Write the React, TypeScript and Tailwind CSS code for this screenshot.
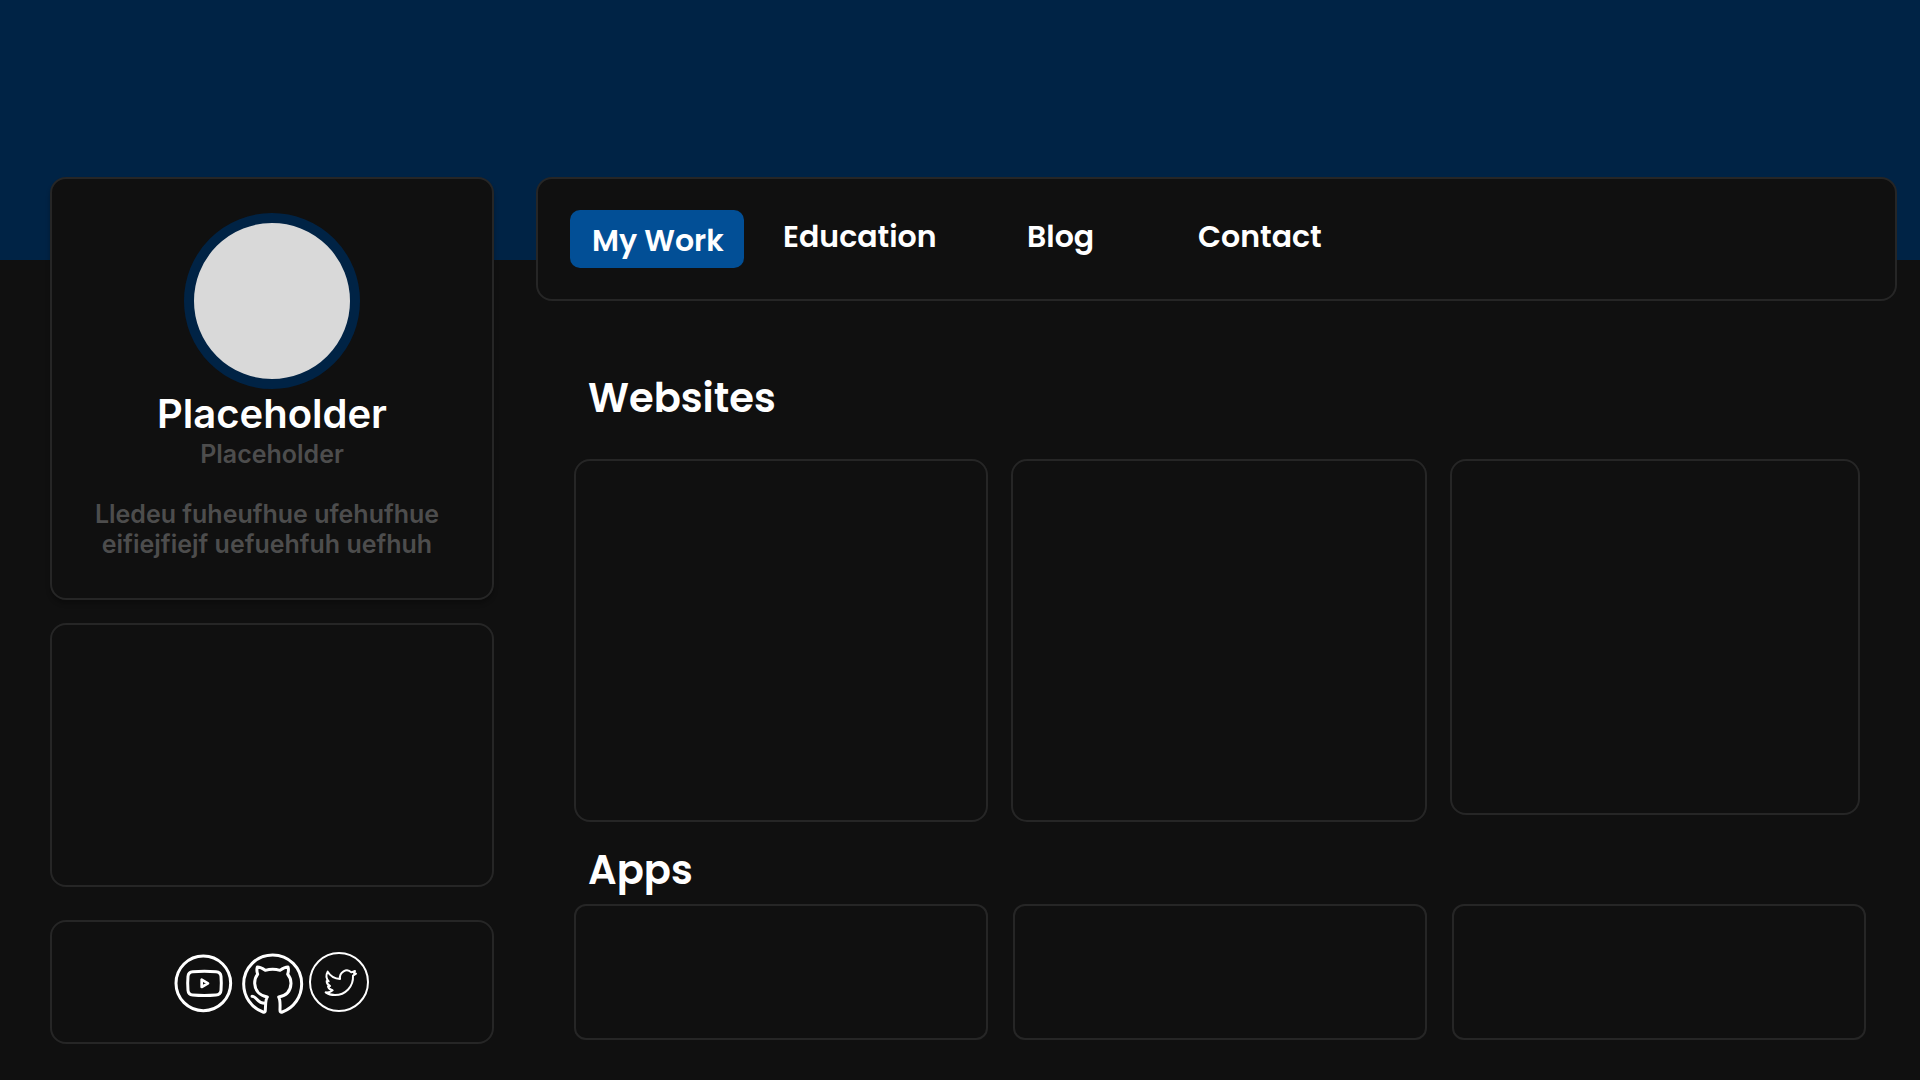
import type { ReactNode } from "react"

const nav = [
  { label: "Education", href: "#education" },
  { label: "Blog", href: "#blog" },
  { label: "Contact", href: "#contact" },
]

function Card({ className = "rounded-2xl", children }: { className?: string; children?: ReactNode }) {
  return <div className={`border-2 border-[#262626] bg-[#101010] ${className}`}>{children}</div>
}

function YoutubeIcon() {
  return (
    <svg viewBox="39 60 198 192" className="h-16 w-[66px]" fill="none" stroke="currentColor" aria-hidden="true">
      <circle cx="130" cy="160" r="82" strokeWidth="9" />
      <path
        d="M98 125Q133 122 168 125Q182 126 183 139Q185 160 183 181Q182 194 168 195Q133 198 98 195Q85 194 84 181Q82 160 84 139Q85 126 98 125Z"
        strokeWidth="9"
      />
      <path d="M125 149v22l19-11z" strokeWidth="8" strokeLinejoin="round" />
    </svg>
  )
}

function GithubIcon() {
  return (
    <svg
      viewBox="237 60 198 192"
      className="h-16 w-[66px]"
      fill="none"
      stroke="currentColor"
      strokeWidth="9"
      strokeLinecap="round"
      strokeLinejoin="round"
      aria-hidden="true"
    >
      <path d="M322 201C298 197 285 181 284 160C284 150 286 141 293 133C290 124 290 117 292 111C302 111 308 115 316 121C330 117 346 117 360 121C368 115 374 111 384 111C386 117 386 124 383 133C390 141 393 150 393 160C392 181 380 197 356 201C362 211 360 225 360 240C360 246 362 248 367 246C402 233 425 200 425 162C425 113 386 75 338 75C290 75 251 113 251 162C251 200 274 233 309 246C314 248 316 246 316 240L317 220C317 213 318 207 322 201" />
      <path d="M276 199C292 199 290 221 316 220" />
    </svg>
  )
}

function TwitterIcon() {
  return (
    <svg
      viewBox="435 60 198 192"
      className="h-16 w-[66px]"
      fill="none"
      stroke="currentColor"
      strokeWidth="6"
      strokeLinejoin="round"
      aria-hidden="true"
    >
      <circle cx="537" cy="156" r="87" />
      <path d="M503 125C511 138 524 146 540 147C537 127 560 112 574 127L585 123L582 129L588 131L579 137C581 170 556 195 525 195C514 195 504 192 497 187C507 188 513 186 518 181C510 180 506 175 504 170L510 168C503 165 500 160 500 153L506 154C499 146 498 134 503 125Z" />
    </svg>
  )
}

export default function App() {
  return (
    <div className="min-h-screen bg-[#101010] pb-9 font-['Inter',sans-serif] font-semibold text-white">
      <div className="h-[260px] bg-[#002345]" />

      <div className="relative -mt-[83px] grid grid-cols-[444px_1fr] items-start gap-[42px] pl-[50px] pr-[23px]">
        <aside>
          <Card className="flex h-[423px] flex-col items-center rounded-2xl pt-[34px] shadow-[0_4px_4px_rgba(0,0,0,0.25)]">
            <div className="size-44 rounded-full border-10 border-[#002345] bg-[#d9d9d9]" />
            <h1 className="text-[40px] leading-[50px]">Placeholder</h1>
            <p className="text-[25px] leading-[30px] text-[#4d4d4d]">Placeholder</p>
            <p className="mt-[30px] pr-2.5 text-center text-[25px] leading-[30px] text-[#4d4d4d]">
              Lledeu fuheufhue ufehufhue
              <br />
              eifiejfiejf uefuehfuh uefhuh
            </p>
          </Card>

          <Card className="mt-[23px] h-[264px] rounded-2xl" />

          <Card className="mt-[33px] flex h-[124px] items-center justify-center rounded-2xl">
            <a href="#youtube" aria-label="YouTube">
              <YoutubeIcon />
            </a>
            <a href="#github" aria-label="GitHub">
              <GithubIcon />
            </a>
            <a href="#twitter" aria-label="Twitter">
              <TwitterIcon />
            </a>
          </Card>
        </aside>

        <main className="font-['Poppins','Inter',sans-serif]">
          <Card className="h-[124px] rounded-2xl px-8 py-[31px]">
            <nav className="flex text-[30px] leading-[54px]">
              <a href="#work" className="mr-[39px] h-[58px] w-[174px] rounded-[10px] bg-[#024f96] pl-[22px] leading-[62px]">
                My Work
              </a>
              <div className="grid grid-cols-[244px_171px_auto]">
                {nav.map((item) => (
                  <a key={item.label} href={item.href}>
                    {item.label}
                  </a>
                ))}
              </div>
            </nav>
          </Card>

          <section className="pl-[38px] pr-[37px] pt-[67px]">
            <h2 className="pl-3.5 text-[40px] leading-[60px]">Websites</h2>
            <div className="mt-[31px] grid grid-cols-[414fr_416fr_410fr] items-start gap-[23px]">
              <Card className="h-[363px] rounded-2xl" />
              <Card className="h-[363px] rounded-2xl" />
              <Card className="h-[356px] rounded-2xl" />
            </div>
          </section>

          <section className="pl-[38px] pr-[31px] pt-[18px]">
            <h2 className="pl-3.5 text-[40px] leading-[60px]">Apps</h2>
            <div className="mt-1 grid grid-cols-3 gap-[25px]">
              <Card className="h-[136px] rounded-xl" />
              <Card className="h-[136px] rounded-xl" />
              <Card className="h-[136px] rounded-xl" />
            </div>
          </section>
        </main>
      </div>
    </div>
  )
}
